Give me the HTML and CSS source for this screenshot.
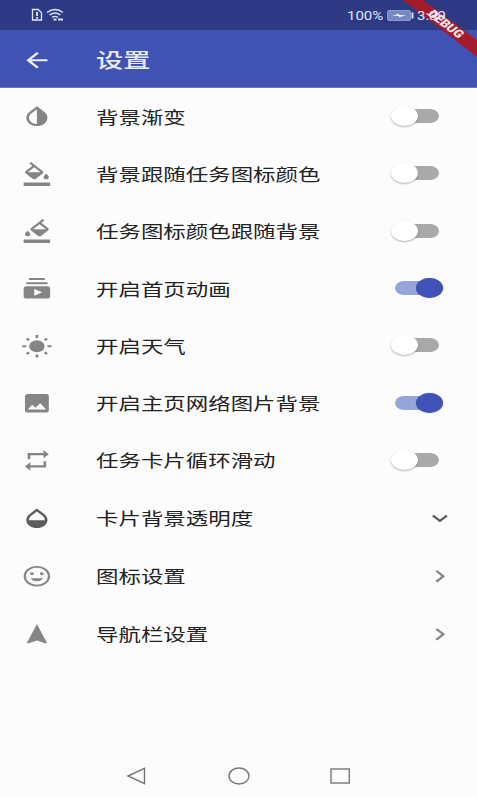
FILE: index.html
```html
<!DOCTYPE html>
<html lang="zh-CN">
<head>
<meta charset="utf-8">
<title>设置</title>
<link rel="stylesheet" href="styles.css">
</head>
<body>
<div class="screen">
  <header class="status">
    <svg class="signal" viewBox="0 0 34 14"><path d="M1.500 1.500H7L10.500 4.500V12H1.500Z" fill="none" stroke="#dfe3ff" stroke-width="1.300"/><path d="M6 4v4M6 9v1.700" stroke="#dfe3ff" stroke-width="1.900"/><g fill="none" stroke="#dfe3ff" stroke-width="1.400"><path d="M16 4.500Q24 -1.500 32 4.500M18.500 7Q24 3 29.500 7M21 9.500Q24 7.300 27 9.500"/><path d="M22.500 11.500h3M27 11.500h5" stroke-width="1.800"/></g></svg>
    <span class="percent">100%</span>
    <svg class="battery" viewBox="0 0 27 11"><rect x=".5" y=".5" width="23" height="10" rx="1.500" fill="#7787c4" stroke="#8d9ace"/><path d="M5 5.500L12 3.700V5L19 5.300L12 7.200V6Z" fill="#f4f2ff"/><path d="M25.500 2.500v6" stroke="#d8ddfa" stroke-width="2"/></svg>
    <span class="clock">3:39</span>
  </header>
  <div class="appbar">
    <svg class="icon back" viewBox="0 0 24 24" preserveAspectRatio="none"><path d="M20 11H7.830l5.590-5.590L12 4l-8 8 8 8 1.410-1.410L7.830 13H20z"/></svg>
    <h1 class="title">设置</h1>
  </div>
  <main class="list">
    <div class="row"><svg class="icon" viewBox="0 0 24 24" preserveAspectRatio="none"><path d="M17.660 7.930L12 2.270 6.340 7.930c-3.120 3.120-3.120 8.190 0 11.310C7.900 20.800 9.950 21.580 12 21.580s4.100-.78 5.660-2.340c3.120-3.120 3.120-8.190 0-11.310zM12 19.590c-1.600 0-3.110-.62-4.240-1.760C6.620 16.690 6 15.190 6 13.590s.62-3.110 1.760-4.240L12 5.100v14.490z"/></svg><span class="label">背景渐变</span><i class="switch"></i></div>
    <div class="row"><svg class="icon" viewBox="0 0 24 24" preserveAspectRatio="none"><path d="M16.560 8.940L7.620 0 6.210 1.410l2.380 2.380-5.150 5.150c-.59.59-.59 1.540 0 2.120l5.500 5.500c.29.29.68.44 1.060.44s.77-.15 1.060-.44l5.500-5.500c.59-.58.59-1.530 0-2.120zM5.210 10L10 5.210 14.790 10H5.210zM19 11.500s-2 2.170-2 3.500c0 1.100.9 2 2 2s2-.9 2-2c0-1.330-2-3.500-2-3.500zM2 20h20v4H2z"/></svg><span class="label">背景跟随任务图标颜色</span><i class="switch"></i></div>
    <div class="row"><svg class="icon" viewBox="0 0 24 24" preserveAspectRatio="none"><path transform="matrix(-1 0 0 1 24 0)" d="M16.560 8.940L7.620 0 6.210 1.410l2.380 2.380-5.150 5.150c-.59.59-.59 1.540 0 2.120l5.500 5.500c.29.29.68.44 1.060.44s.77-.15 1.060-.44l5.500-5.500c.59-.58.59-1.530 0-2.120zM5.210 10L10 5.210 14.790 10H5.210zM19 11.500s-2 2.170-2 3.500c0 1.100.9 2 2 2s2-.9 2-2c0-1.330-2-3.500-2-3.500zM2 20h20v4H2z"/></svg><span class="label">任务图标颜色跟随背景</span><i class="switch"></i></div>
    <div class="row"><svg class="icon" viewBox="0 0 24 24" preserveAspectRatio="none"><path d="M20 8H4V6h16v2zm-2-6H6v2h12V2zm4 10v8c0 1.100-.9 2-2 2H4c-1.100 0-2-.9-2-2v-8c0-1.100.9-2 2-2h16c1.100 0 2 .9 2 2zm-6 4l-6-3.270v6.530L16 16z"/></svg><span class="label">开启首页动画</span><i class="switch on"></i></div>
    <div class="row"><svg class="icon" viewBox="0 0 24 24" preserveAspectRatio="none"><circle cx="12" cy="12" r="5.800"/><path fill="none" stroke="#858585" stroke-width="2" d="M12 1v3M12 20v3M1 12h3M20 12h3M4.300 4.300l1.800 1.800M17.900 17.900l1.800 1.800M4.300 19.700l1.800-1.800M17.900 6.100l1.800-1.800"/></svg><span class="label">开启天气</span><i class="switch"></i></div>
    <div class="row"><svg class="icon" viewBox="0 0 24 24" preserveAspectRatio="none"><path d="M21 19V5c0-1.100-.9-2-2-2H5c-1.100 0-2 .9-2 2v14c0 1.100.9 2 2 2h14c1.100 0 2-.9 2-2zM8.500 13.500l2.500 3.010L14.500 12l4.500 6H5l3.500-4.500z"/></svg><span class="label">开启主页网络图片背景</span><i class="switch on"></i></div>
    <div class="row"><svg class="icon" viewBox="0 0 24 24" preserveAspectRatio="none"><path d="M7 7h10v3l4-4-4-4v3H5v6h2V7zm10 10H7v-3l-4 4 4 4v-3h12v-6h-2v4z"/></svg><span class="label">任务卡片循环滑动</span><i class="switch"></i></div>
    <div class="row tall"><svg class="icon dark" viewBox="0 0 24 24" preserveAspectRatio="none"><path d="M17.660 8L12 2.350 6.340 8C4.780 9.560 4 11.640 4 13.640s.78 4.110 2.340 5.670 3.610 2.350 5.660 2.350 4.100-.79 5.660-2.350S20 15.640 20 13.640 19.220 9.560 17.660 8zM6 14c.01-2 .62-3.270 1.760-4.400L12 5.270l4.240 4.380C17.380 10.770 17.990 12 18 14H6z"/></svg><span class="label">卡片背景透明度</span><svg class="icon arrow dark" viewBox="0 0 24 24" preserveAspectRatio="none"><path d="M16.590 8.590L12 13.170 7.410 8.590 6 10l6 6 6-6z"/></svg></div>
    <div class="row tall"><svg class="icon" viewBox="0 0 24 24" preserveAspectRatio="none"><path fill-rule="evenodd" d="M12 2a10 10 0 1 0 0 20a10 10 0 0 0 0-20zM12 20.300a8.300 8.300 0 1 1 0-16.600a8.300 8.300 0 0 1 0 16.600zM8.300 8.200a1.400 1.400 0 1 0 0 2.800a1.400 1.400 0 0 0 0-2.800zM15.700 8.200a1.400 1.400 0 1 0 0 2.800a1.400 1.400 0 0 0 0-2.800zM7.300 14c.8 2 2.600 3 4.700 3s3.900-1 4.700-3z"/></svg><span class="label">图标设置</span><svg class="icon arrow" viewBox="0 0 24 24" preserveAspectRatio="none"><path d="M8.590 16.590L13.170 12 8.590 7.410 10 6l6 6-6 6z"/></svg></div>
    <div class="row tall"><svg class="icon" viewBox="0 0 24 24" preserveAspectRatio="none"><path d="M12 2L4.500 20.290l.71.71L12 18l6.790 3 .71-.71z"/></svg><span class="label">导航栏设置</span><svg class="icon arrow" viewBox="0 0 24 24" preserveAspectRatio="none"><path d="M8.590 16.590L13.170 12 8.590 7.410 10 6l6 6-6 6z"/></svg></div>
  </main>
  <nav class="navbar">
    <svg viewBox="0 0 22 20"><path d="M2 10L18.500 2.300V17.700Z"/></svg>
    <svg viewBox="0 0 22 20"><ellipse cx="11" cy="10" rx="10" ry="8"/></svg>
    <svg viewBox="0 0 22 20"><rect x="1" y="3" width="18.300" height="14"/></svg>
  </nav>
  <svg class="banner" viewBox="0 0 77 58"><path d="M3 0H23L77 40V57Z" fill="#a31c2c"/><text transform="matrix(.937 .721 -.937 .721 46 24)" text-anchor="middle" y="3.600">DEBUG</text></svg>
</div>
</body>
</html>
```
FILE: styles.css
```css
* { box-sizing: border-box; }
body { margin: 0; background: #fcfcfc; font-family: Roboto, "Noto Sans CJK SC", sans-serif; }
.screen { position: relative; width: 477px; height: 797px; overflow: hidden; display: flex; flex-direction: column; }
.status { height: 30px; flex: none; background: #2e3b84; display: flex; align-items: center; color: #dfe3ff; font-size: 12.500px; }
.signal { width: 34px; height: 14px; margin-left: 31px; }
.percent { width: 36px; margin-left: 282px; transform: scaleX(1.2); transform-origin: left; }
.battery { width: 27px; height: 11px; margin-left: 4px; }
.clock { position: relative; z-index: 2; margin-left: 3px; transform: scaleX(1.2); transform-origin: left; }
.appbar { height: 58px; flex: none; background: #4052b4; display: flex; align-items: center; padding: 3px 0 0 21px; border-bottom: 1px solid #6673bd; }
.icon { width: 31.800px; height: 24.500px; flex: none; fill: #858585; }
.dark { fill: #5c5c5c; }
.back { fill: #eef0ff; }
.title { margin: 2px 0 0 43px; font-size: 20.500px; font-weight: 500; line-height: 30px; color: #e9ecff; transform: scaleX(1.325); transform-origin: left; }
.list { flex: 1; display: flex; flex-direction: column; }
.row { height: 57.300px; flex: none; display: flex; align-items: center; padding: 0 21px; }
.tall { height: 57.900px; }
.label { margin: 2px 0 0 43px; font-size: 17px; line-height: 24px; color: #222; white-space: nowrap; transform: scaleX(1.32); transform-origin: left; }
.switch { position: relative; width: 44px; height: 14px; margin: -1px 17px 0 auto; border-radius: 9px / 7px; background: #a9a9a9; }
.switch::after { content: ""; position: absolute; left: -4px; top: -3px; width: 27px; height: 20px; border-radius: 50%; background: #fff; box-shadow: 0 1px 2px rgba(0,0,0,.3); }
.switch.on { background: #97a4dc; }
.switch.on::after { left: 21px; background: #4052b8; box-shadow: 0 0 1px rgba(30,40,110,.5); }
.arrow { margin-left: auto; }
.navbar { height: 42px; flex: none; display: flex; justify-content: center; gap: 80px; align-items: center; }
.navbar svg { width: 22px; height: 20px; fill: none; stroke: #777; stroke-width: 1.400; }
.banner { position: absolute; top: 0; right: 0; width: 77px; height: 58px; z-index: 1; }
.banner text { font: 900 10.500px Roboto, sans-serif; fill: #f8ecef; }
```
